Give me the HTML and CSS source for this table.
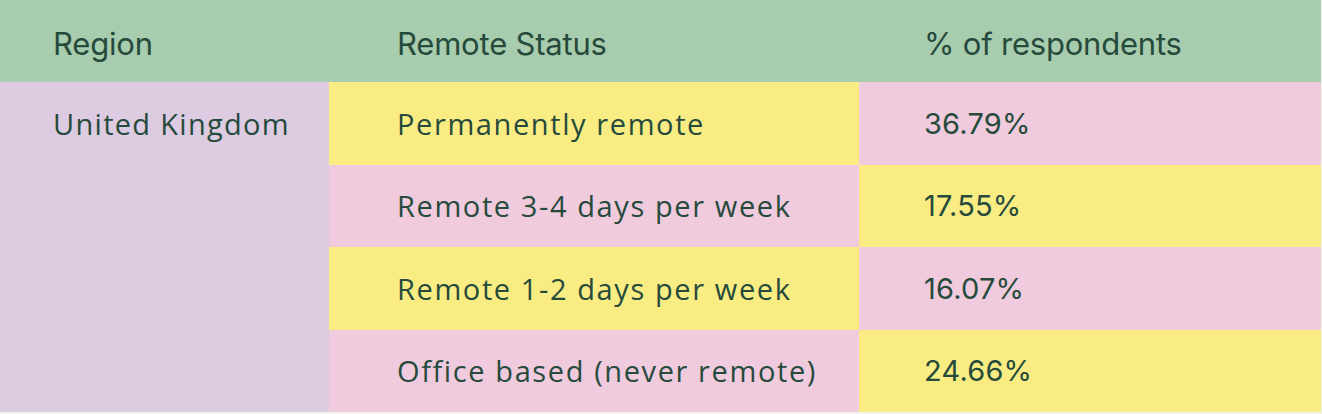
FILE: index.html
```html
<!DOCTYPE html>
<html lang="en">
<head>
<meta charset="utf-8">
<title>Remote status</title>
<link rel="stylesheet" href="styles.css">
</head>
<body>
<div class="table">
  <div class="th c1">Region</div>
  <div class="th c2">Remote Status</div>
  <div class="th c3">% of respondents</div>

  <div class="region c1">United Kingdom</div>

  <div class="cell c2 yellow">Permanently remote</div>
  <div class="cell c3 pink num">36.79%</div>

  <div class="cell c2 pink">Remote 3-4 days per week</div>
  <div class="cell c3 yellow num">17.55%</div>

  <div class="cell c2 yellow">Remote 1-2 days per week</div>
  <div class="cell c3 pink num">16.07%</div>

  <div class="cell c2 pink">Office based (never remote)</div>
  <div class="cell c3 yellow num">24.66%</div>
</div>
</body>
</html>
```
FILE: styles.css
```css
html, body {
  margin: 0;
  padding: 0;
  background: #f3f3ee;
}

.table {
  width: 1321px;
  display: grid;
  grid-template-columns: 329px 530px 462px;
  grid-template-rows: 82px 82.5px 82.5px 82.5px 82.5px;
  color: #264a3c;
}

.th {
  background: #a8cdae;
  display: flex;
  align-items: center;
  padding-top: 5px;
  box-sizing: border-box;
  font-family: "Inter", "Liberation Sans", sans-serif;
  font-size: 31px;
  font-weight: 400;
  letter-spacing: -0.2px;
}

.region {
  grid-row: 2 / span 4;
  background: #ddcbe1;
  line-height: 83px;
  font-family: "Open Sans", "Liberation Sans", sans-serif;
  font-size: 29px;
  letter-spacing: 1.3px;
}

.cell {
  display: flex;
  align-items: center;
  font-family: "Open Sans", "Liberation Sans", sans-serif;
  font-size: 29px;
  letter-spacing: 1.6px;
}

.num {
  font-family: "Inter", "Liberation Sans", sans-serif;
  font-size: 29px;
  letter-spacing: 0.2px;
}

.c1 { padding-left: 53px; }
.c2 { padding-left: 68px; }
.c3 { padding-left: 65px; }

.yellow { background: #f8ec83; }
.pink { background: #f0cbdd; }
```
